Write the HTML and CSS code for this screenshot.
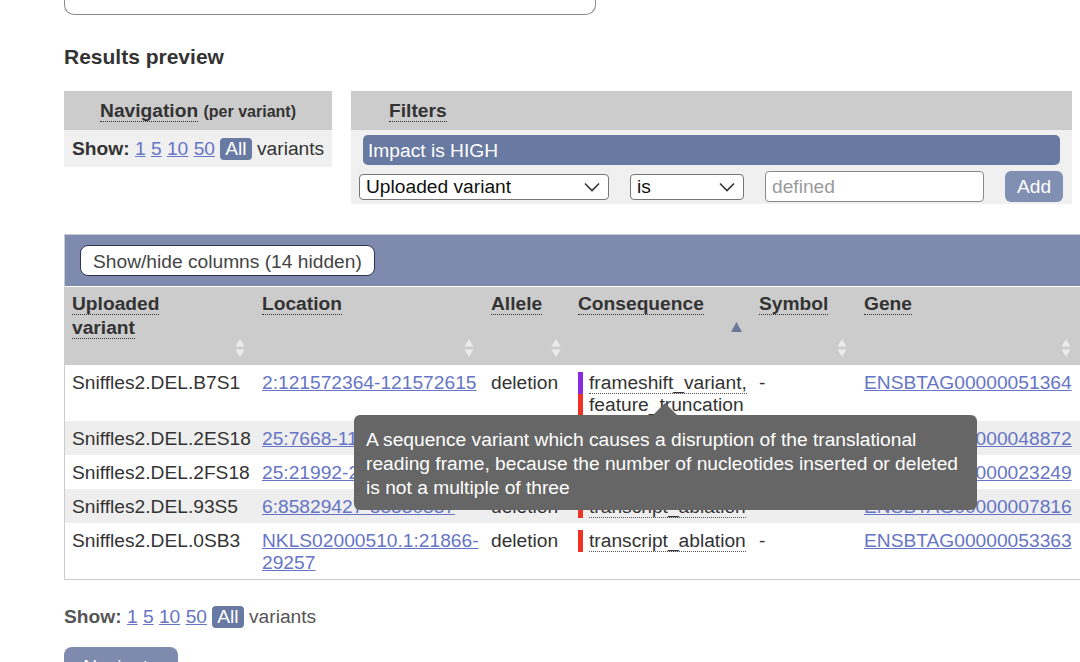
FILE: index.html
```html
<!DOCTYPE html>
<html lang="en">
<head>
<meta charset="utf-8">
<title>Results preview</title>
<link rel="stylesheet" href="styles.css">
</head>
<body>
<div class="page">
  <div class="prev-box"></div>
  <h2 class="title">Results preview</h2>

  <div class="controls">
    <div class="panel nav-panel">
      <div class="panel-head nav-head"><span class="dotted">Navigation</span> <span class="sub">(per variant)</span></div>
      <div class="panel-body show-line nav-body">
        <b>Show:</b> <a href="#">1</a> <a href="#">5</a> <a href="#">10</a> <a href="#">50</a> <span class="badge">All</span> variants
      </div>
    </div>

    <div class="panel filter-panel">
      <div class="panel-head filters-head"><span class="dotted">Filters</span></div>
      <div class="panel-body filter-body">
        <div class="active-filter">Impact is HIGH</div>
        <div class="filter-row">
          <div class="select sel-field"><span>Uploaded variant</span><svg class="chev" width="16" height="10" viewBox="0 0 16 10"><path d="M1 1.5 L8 8.5 L15 1.5" fill="none" stroke="#333" stroke-width="1.6"/></svg></div>
          <div class="select sel-op"><span>is</span><svg class="chev" width="16" height="10" viewBox="0 0 16 10"><path d="M1 1.5 L8 8.5 L15 1.5" fill="none" stroke="#333" stroke-width="1.6"/></svg></div>
          <input class="text-input" type="text" placeholder="defined">
          <button class="add-btn" type="button">Add</button>
        </div>
      </div>
    </div>
  </div>

  <div class="results">
    <div class="toolbar"><button class="cols-btn" type="button">Show/hide columns (14 hidden)</button></div>
    <table class="grid">
      <colgroup>
        <col class="c1"><col class="c2"><col class="c3"><col class="c4"><col class="c5"><col class="c6">
      </colgroup>
      <thead>
        <tr>
          <th><span class="dotted">Uploaded<br>variant</span><svg class="sort" width="10" height="20" viewBox="0 0 10 20"><path d="M5 1 L9.5 8.5 H0.5Z M5 19 L9.5 11.5 H0.5Z" fill="#ececec"/></svg></th>
          <th><span class="dotted">Location</span><svg class="sort" width="10" height="20" viewBox="0 0 10 20"><path d="M5 1 L9.5 8.5 H0.5Z M5 19 L9.5 11.5 H0.5Z" fill="#ececec"/></svg></th>
          <th><span class="dotted">Allele</span><svg class="sort" width="10" height="20" viewBox="0 0 10 20"><path d="M5 1 L9.5 8.5 H0.5Z M5 19 L9.5 11.5 H0.5Z" fill="#ececec"/></svg></th>
          <th><span class="dotted">Consequence</span><svg class="sort-active" width="11" height="10" viewBox="0 0 11 10"><path d="M5.5 0 L11 10 H0Z" fill="#6d7898"/></svg></th>
          <th><span class="dotted">Symbol</span><svg class="sort" width="10" height="20" viewBox="0 0 10 20"><path d="M5 1 L9.5 8.5 H0.5Z M5 19 L9.5 11.5 H0.5Z" fill="#ececec"/></svg></th>
          <th><span class="dotted">Gene</span><svg class="sort" width="10" height="20" viewBox="0 0 10 20"><path d="M5 1 L9.5 8.5 H0.5Z M5 19 L9.5 11.5 H0.5Z" fill="#ececec"/></svg></th>
        </tr>
      </thead>
      <tbody>
        <tr>
          <td>Sniffles2.DEL.B7S1</td>
          <td><a href="#">2:121572364-121572615</a></td>
          <td>deletion</td>
          <td>
            <div class="csq purple"><span class="dotted-thin">frameshift_variant,</span></div>
            <div class="csq red"><span class="dotted-thin">feature_truncation</span></div>
          </td>
          <td>-</td>
          <td><a href="#">ENSBTAG00000051364</a></td>
        </tr>
        <tr>
          <td>Sniffles2.DEL.2ES18</td>
          <td><a href="#">25:7668-11903</a></td>
          <td>deletion</td>
          <td><div class="csq red"><span class="dotted-thin">transcript_ablation</span></div></td>
          <td>-</td>
          <td><a href="#">ENSBTAG00000048872</a></td>
        </tr>
        <tr>
          <td>Sniffles2.DEL.2FS18</td>
          <td><a href="#">25:21992-28456</a></td>
          <td>deletion</td>
          <td><div class="csq red"><span class="dotted-thin">transcript_ablation</span></div></td>
          <td>-</td>
          <td><a href="#">ENSBTAG00000023249</a></td>
        </tr>
        <tr>
          <td>Sniffles2.DEL.93S5</td>
          <td><a href="#">6:85829427-85830337</a></td>
          <td>deletion</td>
          <td><div class="csq red"><span class="dotted-thin">transcript_ablation</span></div></td>
          <td>-</td>
          <td><a href="#">ENSBTAG00000007816</a></td>
        </tr>
        <tr>
          <td>Sniffles2.DEL.0SB3</td>
          <td><a href="#">NKLS02000510.1:21866-29257</a></td>
          <td>deletion</td>
          <td><div class="csq red"><span class="dotted-thin">transcript_ablation</span></div></td>
          <td>-</td>
          <td><a href="#">ENSBTAG00000053363</a></td>
        </tr>
      </tbody>
    </table>
    <div class="tooltip">A sequence variant which causes a disruption of the translational<br>reading frame, because the number of nucleotides inserted or deleted<br>is not a multiple of three</div>
  </div>

  <div class="show-line bottom-show">
    <b>Show:</b> <a href="#">1</a> <a href="#">5</a> <a href="#">10</a> <a href="#">50</a> <span class="badge">All</span> variants
  </div>
  <button class="nav-btn" type="button">Navigate</button>
</div>
</body>
</html>
```

FILE: styles.css
```css
html {
  overflow: hidden;
}

body {
  margin: 0;
  font-family: "Liberation Sans", Arial, Helvetica, sans-serif;
  font-size: 19.2px;
  color: #333;
  background: #fff;
}

a {
  color: #6675c5;
  text-decoration: underline;
}

.page {
  padding-left: 64px;
}

.prev-box {
  width: 530px;
  height: 14px;
  border: 1px solid #8a8a8a;
  border-top: none;
  border-radius: 0 0 10px 10px;
}

.title {
  margin: 30px 0 0;
  font-size: 21px;
  line-height: 24px;
  font-weight: bold;
  color: #333;
}

/* control panels */
.controls {
  display: flex;
  align-items: flex-start;
  gap: 19px;
  margin-top: 22px;
}

.panel-head {
  background: #cccccc;
  height: 39px;
  line-height: 39px;
  font-weight: bold;
  color: #333;
}

.panel-body {
  background: #f0f0f0;
}

.dotted {
  border-bottom: 1px dotted #333;
}

.nav-panel {
  width: 268px;
}

.nav-head {
  text-align: center;
}

.sub {
  font-size: 16px;
}

.nav-body {
  height: 37px;
  line-height: 37px;
  padding-left: 8px;
}

.show-line b {
  font-weight: bold;
}

.badge {
  display: inline-block;
  background: #6879a2;
  color: #fff;
  line-height: 22px;
  padding: 0 5px;
  border-radius: 4px;
}

.filter-panel {
  width: 721px;
}

.filters-head {
  padding-left: 38px;
}

.filter-body {
  padding: 5px 9px 1px 8px;
}

.active-filter {
  height: 30px;
  line-height: 31px;
  margin: 0 3px 0 4px;
  padding-left: 5px;
  background: #6879a2;
  color: #fff;
  border-radius: 5px;
}

.filter-row {
  display: flex;
  align-items: center;
  gap: 21px;
  height: 33px;
  margin-top: 5px;
}

.select {
  box-sizing: border-box;
  height: 26px;
  display: flex;
  align-items: center;
  justify-content: space-between;
  padding: 0 8px 0 6px;
  background: #fff;
  border: 1px solid #767676;
  border-radius: 4px;
  color: #111;
}

.sel-field {
  width: 250px;
}

.sel-op {
  width: 114px;
}

.text-input {
  box-sizing: border-box;
  width: 219px;
  height: 31px;
  padding: 0 6px;
  border: 1px solid #8a8a8a;
  border-radius: 4px;
  font: inherit;
  color: #333;
  background: #fff;
}

.text-input::placeholder {
  color: #9a9a9a;
}

.add-btn {
  width: 58px;
  height: 31px;
  border: none;
  border-radius: 6px;
  background: #8190b2;
  color: #fff;
  font: inherit;
  padding: 0;
}

/* results table */
.results {
  position: relative;
  width: 1030px;
  margin-top: 30px;
  border: 1px solid #cccccc;
}

.toolbar {
  box-sizing: border-box;
  height: 52px;
  padding: 10px 0 0 15px;
  background: #7f8bae;
  border-bottom: 1px solid #fff;
}

.cols-btn {
  height: 31px;
  padding: 2px 12px 0;
  background: #fff;
  border: 1px solid #2d3250;
  border-radius: 8px;
  font: inherit;
  color: #444;
}

.grid {
  table-layout: fixed;
  border-collapse: collapse;
  width: 1015px;
}

.c1 { width: 189px; }
.c2 { width: 229px; }
.c3 { width: 87px; }
.c4 { width: 181px; }
.c5 { width: 105px; }
.c6 { width: 224px; }

.grid thead tr {
  height: 78px;
}

.grid th {
  position: relative;
  background: #cccccc;
  text-align: left;
  vertical-align: top;
  padding: 5px 8px 0 8px;
  font-weight: bold;
  line-height: 24px;
  color: #333;
}

.grid th:first-child {
  padding-left: 7px;
}

.sort {
  position: absolute;
  right: 9px;
  bottom: 7px;
}

.sort-active {
  position: absolute;
  right: 9px;
  bottom: 33px;
}

.grid td {
  padding: 7px 2px 5px 8px;
  line-height: 22px;
  vertical-align: top;
  color: #333;
}

.grid td:first-child {
  padding-left: 7px;
}

.grid tbody tr:nth-child(even) {
  background: #eeeeee;
}

.csq {
  white-space: nowrap;
  padding-left: 6px;
  border-left: 5px solid #ee3322;
}

.csq.purple {
  border-left-color: #8a2be2;
}

.dotted-thin {
  border-bottom: 1px dotted #555;
}

.tooltip {
  position: absolute;
  left: 289px;
  top: 180px;
  width: 599px;
  padding: 13px 12px 10px;
  background: #666666;
  color: #fff;
  line-height: 24px;
  white-space: nowrap;
  border-radius: 6px;
}

.tooltip::before {
  content: "";
  position: absolute;
  left: 299px;
  top: -12px;
  border-left: 12px solid transparent;
  border-right: 12px solid transparent;
  border-bottom: 12px solid #666666;
}

.bottom-show {
  margin-top: 26px;
  line-height: 22px;
  color: #555;
}

.nav-btn {
  display: block;
  margin-top: 19px;
  width: 114px;
  height: 40px;
  border: none;
  border-radius: 8px;
  background: #7f8bae;
  color: #fff;
  font: inherit;
  padding: 0;
}
```
